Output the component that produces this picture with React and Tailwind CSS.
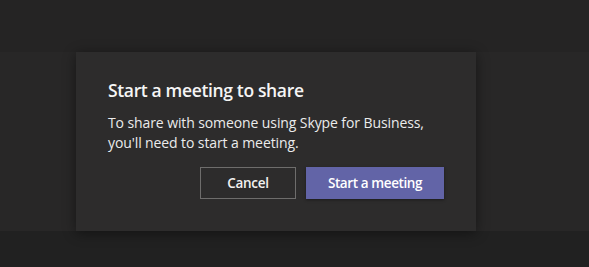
import React from 'react';

export default function App() {
  return (
    <div className="relative h-[267px] w-[589px] overflow-hidden bg-[#212121]" style={{ fontFamily: '"Open Sans", "Noto Sans", sans-serif' }}>
      {/* background bands behind the dialog */}
      <div className="absolute left-0 right-0 top-[52px] h-[179px] bg-[#282727]" />
      <div className="absolute left-0 right-0 top-0 h-[52px] bg-[#252424]" />

      <div className="absolute left-[76px] top-[52px] w-[400px] h-[179px] bg-[#2d2c2c] px-8 pt-[26px] shadow-[0_2px_12px_rgba(0,0,0,0.45)]">
        <h2 className="text-[17.5px] font-semibold leading-6 tracking-[-0.35px] text-[#f5f5f5]">Start a meeting to share</h2>
        <p className="mt-[11px] text-[14px] leading-5 tracking-[-0.1px] text-[#ebebeb]">
          To share with someone using Skype for Business,
          <br />
          you'll need to start a meeting.
        </p>
        <div className="mt-[14px] flex justify-end gap-[10px]">
          <button className="h-8 w-[96px] border border-[#6e6d6c] bg-transparent text-[13.5px] font-semibold tracking-[-0.3px] text-[#f3f2f1]">
            Cancel
          </button>
          <button className="h-8 w-[138px] bg-[#6264a7] text-[13.5px] font-semibold tracking-[-0.4px] text-white shadow-[0_1px_3px_rgba(0,0,0,0.4)]">
            Start a meeting
          </button>
        </div>
      </div>
    </div>
  );
}
